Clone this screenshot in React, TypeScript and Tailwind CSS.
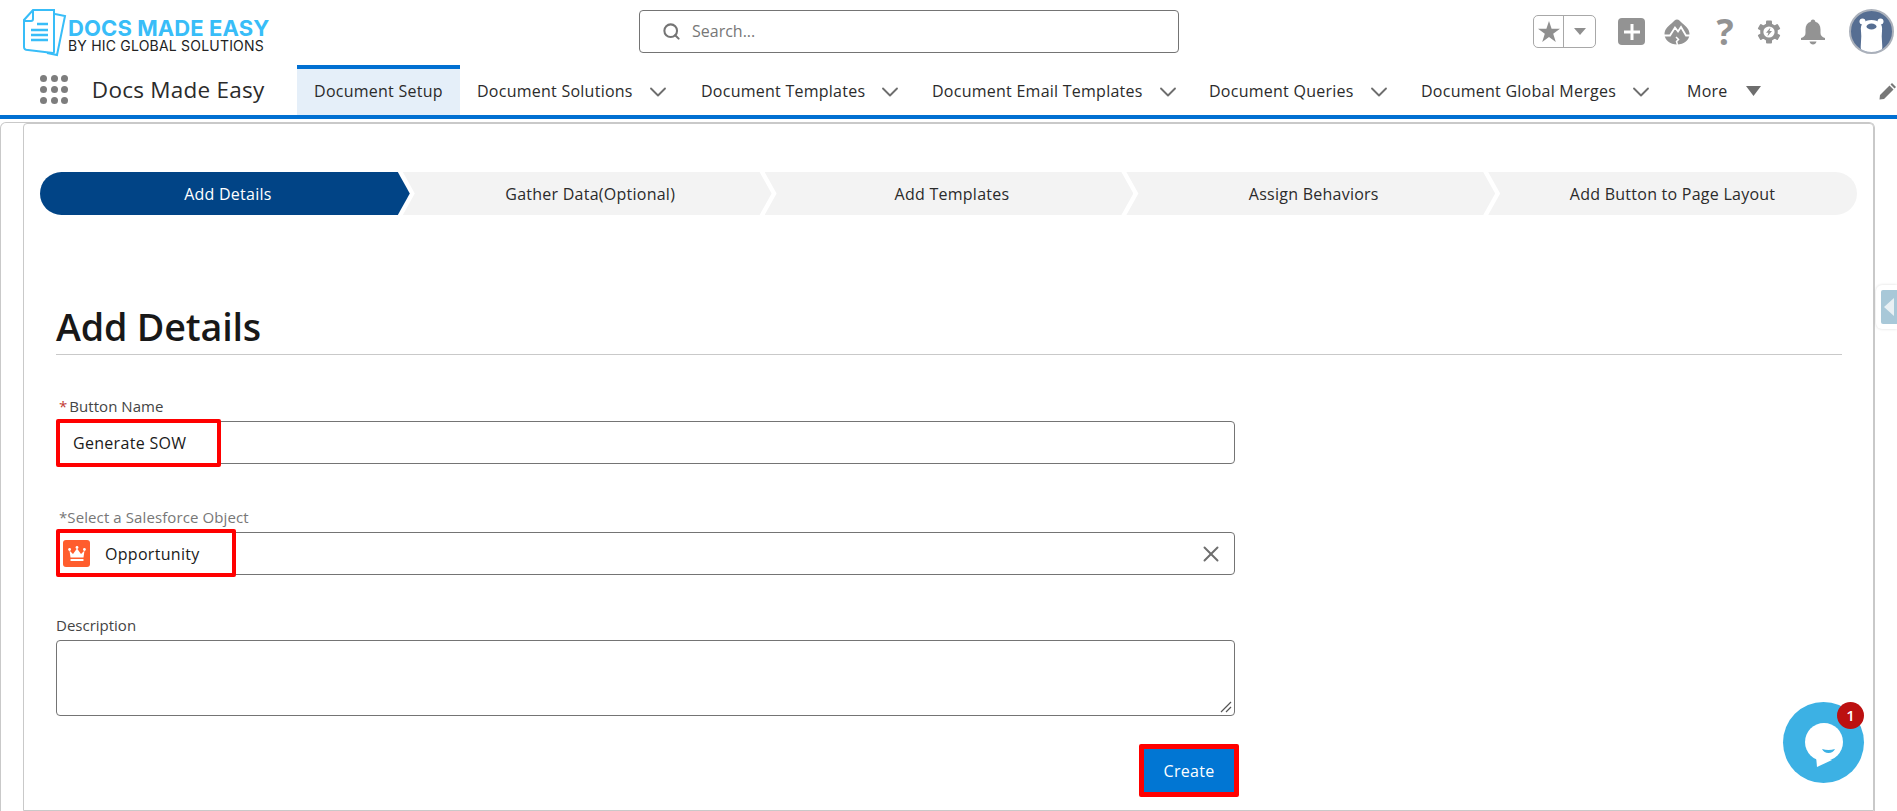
import React from "react";
import { Search, X, ChevronDown } from "lucide-react";

const F = "[font-family:'Open_Sans','Noto_Sans',sans-serif]";

const tabs = [
  { t: "Document Solutions", w: "w-[224px]" },
  { t: "Document Templates", w: "w-[231px]" },
  { t: "Document Email Templates", w: "w-[277px]" },
  { t: "Document Queries", w: "w-[212px]" },
  { t: "Document Global Merges", w: "w-[266px]" },
];

function Logo() {
  return (
    <div className="flex items-center ml-[23px] w-[275px]">
      <svg width="44" height="48" viewBox="0 0 44 48" fill="none" stroke="#38bdf8" strokeWidth="2" className="shrink-0">
        <path d="M32 5 L42 7 L34 46 L24 44" />
        <path d="M10 1 H31 V43 Q31 44 30 44 L5 41 Q1 41 1 38 V11 Z" fill="#fff" />
        <path d="M10 1 V10 Q10 12 8 12 H1" />
        <path d="M14 15 H25 M8 21 H25 M8 26 H25 M8 31 H25" strokeWidth="2.4" />
      </svg>
      <div className="ml-[1px] flex flex-col mt-[6px]">
        <span className="text-[22px] leading-[20px] font-bold text-[#38bdf8] whitespace-nowrap [font-family:'Inter',sans-serif] tracking-[0.1px]">DOCS MADE EASY</span>
        <span className="text-[14px] leading-[15px] font-normal text-[#222] whitespace-nowrap [font-family:'Inter',sans-serif] tracking-[0.2px]">BY HIC GLOBAL SOLUTIONS</span>
      </div>
    </div>
  );
}

function TrailIcon() {
  return (
    <svg width="26" height="26" viewBox="0 0 26 26" className="ml-[19px]">
      <path d="M13 0.5 C15 0.5 16 2 17.5 3.5 C20 6 25.5 9 25.5 15 C25.5 21 20 25.5 13 25.5 C6 25.5 0.5 21 0.5 15 C0.5 9 6 6 8.5 3.5 C10 2 11 0.5 13 0.5Z" fill="#939393" />
      <path d="M0 16.5 H6 L11 8.5 L14 12.5 L17 8 L22 16.5 H26" fill="none" stroke="#fff" strokeWidth="1.8" />
      <path d="M12 18 L14.5 20.5 L12.5 22.5 L13.5 26" fill="none" stroke="#fff" strokeWidth="1.5" />
    </svg>
  );
}

function Gear() {
  return (
    <svg width="24" height="24" viewBox="0 0 24 24" className="ml-[24px]">
      {[0, 60, 120, 180, 240, 300].map((a) => (
        <rect key={a} x="9" y="0.5" width="6" height="6" rx="1" fill="#939393" transform={`rotate(${a} 12 12)`} />
      ))}
      <circle cx="12" cy="12" r="8.8" fill="#939393" />
      <circle cx="12" cy="12" r="5.6" fill="#fff" />
      <path fill="#939393" d="M13.5 7.5 L9 12.8 H11.4 L10.4 16.5 L15 11 H12.5Z" />
    </svg>
  );
}

function BellIcon() {
  return (
    <svg width="26" height="26" viewBox="0 0 26 26" className="ml-[19px]">
      <path d="M13 0.5 C14.5 0.5 15.3 1.5 15.3 2.8 C18.8 3.8 20.5 6.8 20.5 10.5 V14 C20.5 16.5 22 18 25 19 V21 H1 V19 C4 18 5.5 16.5 5.5 14 V10.5 C5.5 6.8 7.2 3.8 10.7 2.8 C10.7 1.5 11.5 0.5 13 0.5Z" fill="#939393" />
      <path d="M9.5 22.5 H16.5 C16 24.5 14.7 25.5 13 25.5 C11.3 25.5 10 24.5 9.5 22.5Z" fill="#939393" />
    </svg>
  );
}

function Avatar() {
  return (
    <div className="ml-[23px] w-[45px] h-[45px] rounded-full bg-[#566e92] border-2 border-[#aab0ba] overflow-hidden shrink-0">
      <svg width="41" height="41" viewBox="0 0 41 41">
        <circle cx="11.5" cy="10.5" r="3" fill="#fff" />
        <circle cx="29.5" cy="10.5" r="3" fill="#fff" />
        <path d="M20.5 9 C28 9 32 13 31 20 C30 27 32 34 31 41 H10 C9 34 11 27 10 20 C9 13 13 9 20.5 9Z" fill="#fff" />
        <ellipse cx="20.5" cy="15.5" rx="5" ry="3" fill="#566e92" />
      </svg>
    </div>
  );
}

function Header() {
  return (
    <div className="h-[65px] flex items-center shrink-0">
      <Logo />
      <div className="ml-[341px] w-[540px] h-[43px] rounded-[4px] border border-[#747474] flex items-center pl-[22px] mt-[-3px]">
        <Search size={19} strokeWidth={2.6} className="text-[#747474]" />
        <span className="ml-[11px] text-[16px] text-[#777]">Search...</span>
      </div>
      <div className="ml-[354px] flex items-center mt-[-2px] h-[46px]">
        <div className="w-[63px] h-[33px] rounded-[5px] border border-[#a8a8a8] flex">
          <div className="w-[30px] flex items-center justify-center border-r border-[#a8a8a8]">
            <svg width="22" height="21" viewBox="0 0 22 21"><path d="M11 0 L13.6 7.8 H22 L15.2 12.8 L17.8 21 L11 16 L4.2 21 L6.8 12.8 L0 7.8 H8.4Z" fill="#8f8f8f" /></svg>
          </div>
          <div className="flex-1 flex items-center justify-center">
            <svg width="12" height="7" viewBox="0 0 12 7"><path d="M0 0H12L6 7Z" fill="#8f8f8f" /></svg>
          </div>
        </div>
        <div className="ml-[22px] w-[27px] h-[27px] rounded-[4px] bg-[#939393] flex items-center justify-center">
          <svg width="18" height="18" viewBox="0 0 18 18"><path d="M9 1V17M1 9H17" stroke="#fff" strokeWidth="3" /></svg>
        </div>
        <TrailIcon />
        <span className="ml-[27px] w-[16px] text-[36px] leading-none font-bold text-[#939393] flex justify-center">?</span>
        <Gear />
        <BellIcon />
        <Avatar />
      </div>
    </div>
  );
}

function Nav() {
  return (
    <div className="h-[54px] flex items-stretch border-b-4 border-[#0170d2] shrink-0 text-[#2b2b2b]">
      <div className="ml-[40px] w-[28px] grid grid-cols-3 gap-[4px] self-center mt-[-1px]">
        {Array.from({ length: 9 }).map((_, i) => (
          <span key={i} className="w-[7px] h-[7px] rounded-full bg-[#7d7d7d]" />
        ))}
      </div>
      <div className="ml-[24px] w-[206px] self-center text-[22.5px] tracking-[0.25px] whitespace-nowrap">Docs Made Easy</div>
      <div className="w-[164px] bg-[#e5eff9] border-t-4 border-[#0170d2] flex items-center justify-center text-[16px] tracking-[0.25px] pb-[2px] whitespace-nowrap">
        Document Setup
      </div>
      <div className="ml-[17px] flex items-center text-[16px] tracking-[0.25px] pt-[1px]">
        {tabs.map((x) => (
          <div key={x.t} className={`${x.w} flex items-center whitespace-nowrap`}>
            {x.t}
            <ChevronDown size={28} strokeWidth={1.6} className="ml-[11px] mt-[2px] text-[#6e6e6e]" />
          </div>
        ))}
        <div className="flex items-center w-[192px]">
          More
          <svg width="15" height="10" viewBox="0 0 15 10" className="ml-[18px]"><path d="M0 0H15L7.5 10Z" fill="#6e6e6e" /></svg>
        </div>
        <svg width="18" height="18" viewBox="0 0 18 18"><path d="M13 1 L17 5 L15.5 6.5 L11.5 2.5Z M10.5 3.5 L14.5 7.5 L5 17 L0.5 17.5 L1 13Z" fill="#777" /></svg>
      </div>
    </div>
  );
}

const steps = ["Gather Data(Optional)", "Add Templates", "Assign Behaviors"];

function Path() {
  return (
    <div className="flex h-[43px] text-[16px] tracking-[0.25px]">
      <div className="w-[370px] rounded-l-full bg-[#014486] text-white flex items-center justify-center pl-[6px] [clip-path:polygon(0_0,calc(100%-12px)_0,100%_50%,calc(100%-12px)_100%,0_100%)]">
        Add Details
      </div>
      {steps.map((s) => (
        <div key={s} className="w-[369px] ml-[-7px] bg-[#f3f3f3] text-[#2b2b2b] flex items-center justify-center pl-[6px] [clip-path:polygon(0_0,calc(100%-12px)_0,100%_50%,calc(100%-12px)_100%,0_100%,12px_50%)]">
          {s}
        </div>
      ))}
      <div className="w-[369px] ml-[-7px] rounded-r-full bg-[#f3f3f3] text-[#2b2b2b] flex items-center justify-center [clip-path:polygon(0_0,100%_0,100%_100%,0_100%,12px_50%)]">
        Add Button to Page Layout
      </div>
    </div>
  );
}

function Form() {
  return (
    <div className="ml-[16px] w-[1179px] text-[#1a1a1a]">
      <div className="text-[15px] leading-[20px] text-[#444] h-[20px] mt-[41px] ml-[3px] tracking-[0.05px]">
        <span className="text-[#c23934] mr-[2px]">*</span>Button Name
      </div>
      <div className="relative mt-[5px] h-[43px] rounded-[4px] border border-[#747474] flex items-center pl-[16px] text-[16px] tracking-[0.3px]">
        Generate SOW
        <div className="absolute left-[-1px] top-[-3px] w-[165px] h-[48px] border-[4px] border-[#ff0000] rounded-[2px]" />
      </div>
      <div className="text-[15px] leading-[20px] text-[#777] h-[20px] mt-[43px] ml-[3px] tracking-[0.1px]">*Select a Salesforce Object</div>
      <div className="relative mt-[5px] h-[43px] rounded-[4px] border border-[#747474] flex items-center pl-[6px] text-[16px] tracking-[0.3px]">
        <div className="w-[27px] h-[27px] rounded-[3px] bg-[#ff5d2d] flex items-center justify-center">
          <svg width="18" height="16" viewBox="0 0 18 16" fill="#fff">
            <circle cx="9" cy="1.5" r="1.4" /><circle cx="1.6" cy="3.5" r="1.4" /><circle cx="16.4" cy="3.5" r="1.4" />
            <path d="M1.5 4.5 L5 8 L9 2.5 L13 8 L16.5 4.5 L15.5 11.5 H2.5Z" />
            <rect x="2.5" y="13" width="13" height="2" rx="0.5" />
          </svg>
        </div>
        <span className="ml-[15px]">Opportunity</span>
        <X size={26} strokeWidth={1.8} className="ml-auto mr-[10px] text-[#6e6e6e]" />
        <div className="absolute left-[-1px] top-[-4px] w-[180px] h-[48px] border-[4px] border-[#ff0000] rounded-[2px]" />
      </div>
      <div className="text-[15px] leading-[20px] text-[#444] h-[20px] mt-[40px]">Description</div>
      <div className="relative mt-[5px] h-[76px] rounded-[4px] border border-[#747474]">
        <svg width="12" height="12" viewBox="0 0 12 12" className="absolute right-[2px] bottom-[2px]" stroke="#555" strokeWidth="1.2">
          <path d="M1 11 L11 1 M6 11 L11 6" />
        </svg>
      </div>
      <div className="flex justify-end mt-[28px]">
        <div className="mr-[-4px] w-[100px] h-[53px] border-[5px] border-[#ff0000] rounded-[2px] bg-[#0176d3] text-white flex items-center justify-center text-[16px] tracking-[0.3px]">
          Create
        </div>
      </div>
    </div>
  );
}

function Main() {
  return (
    <div className="flex-1 mt-[3px] flex min-h-0">
      <div className="w-[1875px] border border-b-0 border-[#c9c9c9] rounded-t-[6px] pl-[22px]">
        <div className="h-full w-[1851px] border border-[#c9c9c9] rounded-t-[4px] bg-white">
          <div className="ml-[16px] mt-[48px] mr-[16px]">
            <Path />
          </div>
          <div className="ml-[32px] mr-[31px] mt-[93px] h-[47px] border-b border-[#c9c9c9] text-[37.7px] leading-[38px] font-semibold text-[#181818] tracking-[-0.2px]">
            Add Details
          </div>
          <div className="ml-[16px]">
            <Form />
          </div>
        </div>
      </div>
    </div>
  );
}

export default function App() {
  return (
    <div className={`relative w-full h-screen overflow-hidden bg-white flex flex-col ${F}`}>
      <Header />
      <Nav />
      <Main />
      <div className="absolute right-0 top-[285px] w-[21px] h-[44px] bg-white rounded-l-[6px] shadow-[0_0_3px_rgba(0,0,0,0.15)] pl-[5px] py-[5px]">
        <div className="w-full h-full bg-[#a8c8d8] rounded-l-[2px] flex items-center justify-center">
          <svg width="10" height="18" viewBox="0 0 10 18"><path d="M10 0V18L0 9Z" fill="#e8f0f4" /></svg>
        </div>
      </div>
      <div className="absolute left-[1783px] top-[702px] w-[81px] h-[81px] rounded-full bg-[#3cb1e4] flex items-center justify-center">
        <svg width="44" height="46" viewBox="0 0 44 46" className="mt-[5px]">
          <circle cx="22" cy="20" r="19" fill="#fff" />
          <path d="M14 34 L15 45 L30 38Z" fill="#fff" />
          <path d="M20 27 Q26.5 29 33 27 Q31 31 26.5 31 Q22 31 20 27Z" fill="#3cb1e4" />
        </svg>
      </div>
      <div className="absolute left-[1837px] top-[702px] w-[27px] h-[27px] rounded-full bg-[#bc1010] text-white text-[15px] font-semibold flex items-center justify-center">1</div>
    </div>
  );
}
